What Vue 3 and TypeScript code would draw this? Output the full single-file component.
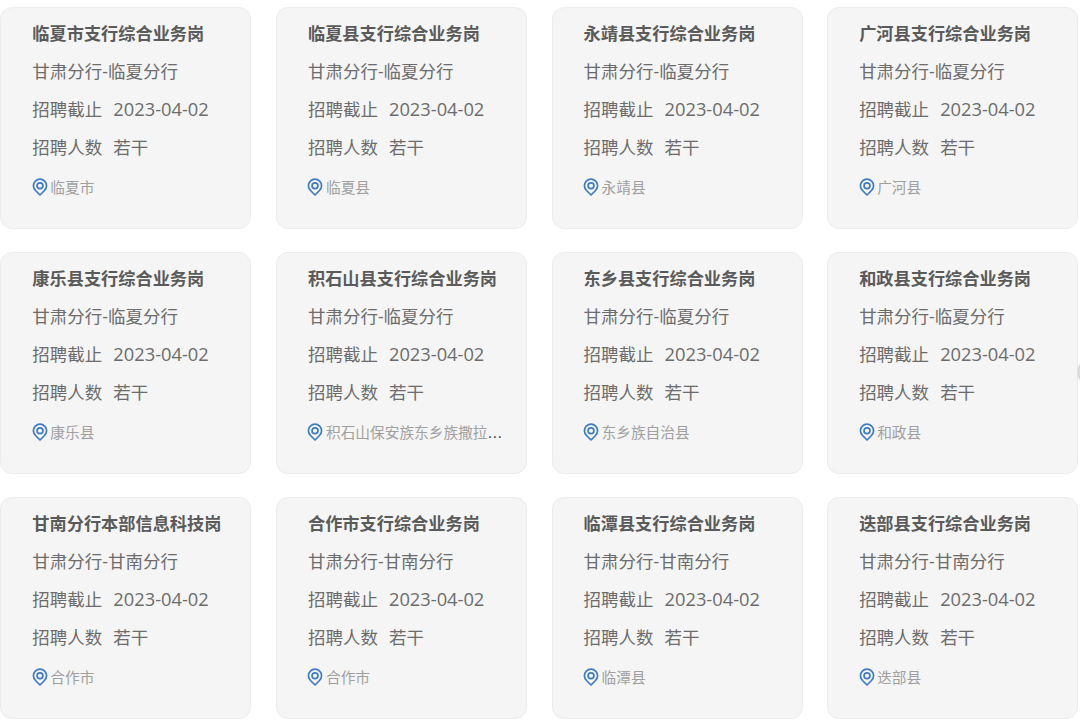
<script setup lang="ts">
interface Job { title: string; org: string; city: string }
const pin = 'M9 1.2C4.9 1.2 1.6 4.5 1.6 8.6c0 2.2 1 4.2 2.6 5.6L9 19l4.8-4.8c1.6-1.4 2.6-3.4 2.6-5.6 0-4.1-3.3-7.4-7.4-7.4z'
const jobs: Job[] = [
  { title: '临夏市支行综合业务岗', org: '甘肃分行-临夏分行', city: '临夏市' },
  { title: '临夏县支行综合业务岗', org: '甘肃分行-临夏分行', city: '临夏县' },
  { title: '永靖县支行综合业务岗', org: '甘肃分行-临夏分行', city: '永靖县' },
  { title: '广河县支行综合业务岗', org: '甘肃分行-临夏分行', city: '广河县' },
  { title: '康乐县支行综合业务岗', org: '甘肃分行-临夏分行', city: '康乐县' },
  { title: '积石山县支行综合业务岗', org: '甘肃分行-临夏分行', city: '积石山保安族东乡族撒拉族自治县' },
  { title: '东乡县支行综合业务岗', org: '甘肃分行-临夏分行', city: '东乡族自治县' },
  { title: '和政县支行综合业务岗', org: '甘肃分行-临夏分行', city: '和政县' },
  { title: '甘南分行本部信息科技岗', org: '甘肃分行-甘南分行', city: '合作市' },
  { title: '合作市支行综合业务岗', org: '甘肃分行-甘南分行', city: '合作市' },
  { title: '临潭县支行综合业务岗', org: '甘肃分行-甘南分行', city: '临潭县' },
  { title: '迭部县支行综合业务岗', org: '甘肃分行-甘南分行', city: '迭部县' },
]
</script>

<template>
  <main class="page">
    <article v-for="job in jobs" :key="job.title" class="card">
      <h3 class="title">{{ job.title }}</h3>
      <p class="line">{{ job.org }}</p>
      <p class="line"><span class="label">招聘截止</span><span class="date">2023-04-02</span></p>
      <p class="line"><span class="label">招聘人数</span>若干</p>
      <div class="loc">
        <svg class="pin" viewBox="0 0 18 20" width="16" height="18" aria-hidden="true">
          <path :d="pin" fill="none" stroke="#3d7cc4" stroke-width="1.9" stroke-linejoin="round" />
          <circle cx="9" cy="8.6" r="3.3" fill="none" stroke="#3d7cc4" stroke-width="1.9" />
        </svg>
        <span class="city"><span class="city-text">{{ job.city }}</span></span>
      </div>
    </article>
    <span class="edge"></span>
  </main>
</template>

<style>
html, body { background: #fff; overflow: hidden; }
</style>

<style scoped>
.page {
  position: relative;
  width: 1080px;
  height: 727px;
  box-sizing: border-box;
  padding: 7px 2px 0 0.35px;
  display: grid;
  grid-template-columns: repeat(4, 251px);
  grid-auto-rows: 222px;
  column-gap: 24.6px;
  row-gap: 23px;
  overflow: hidden;
  font-family: "Open Sans", "Noto Sans CJK SC", sans-serif;
}
.card {
  box-sizing: border-box;
  background: #f5f5f5;
  border: 1px solid #ececec;
  border-radius: 12px;
  padding: 8px 16px 0 31px;
  min-width: 0;
}
.title {
  margin: 0;
  font-size: 17.2px;
  line-height: 36px;
  font-weight: 700;
  color: #5a5a5a;
  white-space: nowrap;
}
.line {
  margin: 0;
  font-size: 17.5px;
  line-height: 38px;
  color: #6c6c6c;
  white-space: nowrap;
}
.label { margin-right: 11px; }
.date { font-size: 18.3px; line-height: 1; }
.loc {
  display: flex;
  align-items: center;
  height: 38px;
  margin-top: 2px;
  margin-left: -0.5px;
  gap: 2.5px;
}
.pin { flex: none; }
.city {
  min-width: 0;
  overflow: hidden;
  white-space: nowrap;
  text-overflow: ellipsis;
  font-family: "DejaVu Sans", "Noto Sans CJK SC", sans-serif;
  font-size: 14.7px;
  line-height: 20px;
  color: #444;
}
.city-text {
  font-family: "Noto Sans CJK SC", sans-serif;
  color: #a0a0a0;
}
.edge {
  position: absolute;
  left: 1077px;
  top: 358px;
  width: 28px;
  height: 28px;
  border-radius: 50%;
  background: #dcdcdc;
}
</style>
